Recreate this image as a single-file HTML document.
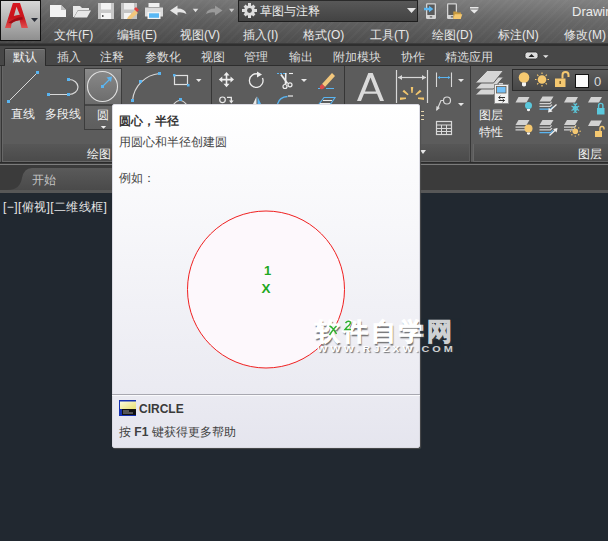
<!DOCTYPE html>
<html><head><meta charset="utf-8">
<style>
*{box-sizing:border-box}
html,body{margin:0;padding:0}
body{width:608px;height:541px;overflow:hidden;position:relative;background:#212830;font-family:"Liberation Sans",sans-serif;}
.a{position:absolute}
.t{position:absolute;white-space:nowrap;line-height:1}
#title{left:0;top:0;width:608px;height:43px;background:linear-gradient(#7a7a7a,#606060 50%,#4e4e4e);}
#titleh{left:0;top:0;width:608px;height:43px;background:linear-gradient(90deg,rgba(0,0,0,0.06),rgba(0,0,0,0) 60%,rgba(255,255,255,0.06));}
#stripes{left:0;top:0;width:608px;height:43px;background:repeating-linear-gradient(135deg,rgba(255,255,255,0) 0 4px,rgba(255,255,255,0.022) 4px 6px);}
.menu{color:#e8e8e8;font-size:12px;top:29px}
#band{left:0;top:43px;width:608px;height:3px;background:#2f2f2f;border-top:1px solid #3c3c3c}
#tabs{left:0;top:46px;width:608px;height:20px;background:#474747}
.tab{color:#dcdcdc;font-size:12px;top:51px}
#panel{left:0;top:65px;width:608px;height:98px;background:#5c5c5c;border-top:1px solid #2e2e2e}
.ptitle{top:144px;height:18px;background:linear-gradient(#575757,#4a4a4a);box-shadow:inset 1px -1px 0 #676767}
.sep{width:1px;background:#363636}
#ftabs{left:0;top:163px;width:608px;height:30px;background:#3b3b3b}
.lbl{color:#f4f4f4;font-size:12px}
#tip{left:112px;top:104px;width:308px;height:344px;border:1px solid #dcdce4;border-radius:2px;background:linear-gradient(#ffffff 0%,#f7f7fa 35%,#ebebf2 82%,#e5e5ee 100%);box-shadow:1px 1px 1px rgba(80,80,80,.9)}
</style></head><body>
<div id="title" class="a"></div>
<div id="titleh" class="a"></div>
<div id="stripes" class="a"></div>

<!-- app button -->
<div class="a" style="left:0;top:0;width:41px;height:41px;background:#111;"></div>
<div class="a" style="left:1px;top:1px;width:39px;height:39px;background:linear-gradient(#d6d6d6,#8f8f8f);"></div>
<svg class="a" style="left:0;top:0" width="41" height="41" viewBox="0 0 41 41">
  <defs><linearGradient id="lg" x1="0" y1="0" x2="0" y2="1"><stop offset="0" stop-color="#d81820"/><stop offset=".6" stop-color="#c8141c"/><stop offset="1" stop-color="#e05050"/></linearGradient></defs>
  <path d="M5 28 L12.9 3 H20 L28 28 H21.5 L19.6 20.3 Q15 21 11.6 23.2 L10.9 28 Z M13.8 16 L16.5 6.8 L19.8 14.8 Q16.5 15 13.8 16 Z" fill="url(#lg)" fill-rule="evenodd"/>
  <path d="M8.3 22.8 Q15 17.5 22.3 17 L22.8 19.6 Q16 20 11.3 23.5 Z" fill="#9c0e16"/>
  <path d="M31 18 L38 18 L34.5 22 Z" fill="#2a2e38"/>
</svg>

<!-- QAT icons -->
<svg class="a" style="left:45px;top:0" width="200" height="24" viewBox="45 0 200 24">
  <path d="M50 5 H61 L66 10 V17 H50 Z" fill="#f2f2f2"/>
  <path d="M61 5 V10 H66" fill="#bdbdbd"/>
  <path d="M73 6 H80 L82 8 H89 V10 H78 L74 17 H73 Z" fill="#e8e8e8"/>
  <path d="M78 10.5 H91 L87 17.5 H74 Z" fill="#e8e8e8"/>
  <path d="M98 3 H114 V19 H98 Z" fill="#c8c8c8"/>
  <path d="M101 3 H111 V9.5 H101 Z" fill="#f2f2f2"/>
  <path d="M101 13 H111 V19 H101 Z" fill="#f4f4f4"/>
  <rect x="102" y="15" width="1.5" height="2" fill="#555"/>
  <path d="M121 3 H137 V19 H121 Z" fill="#c4c4c4"/>
  <path d="M124 3 H134 V9.5 H124 Z" fill="#eeeeee"/>
  <path d="M124 13 H131 V19 H124 Z" fill="#f4f4f4"/>
  <path d="M128 17 L135 10 L138 13 L131 19 L127 19 Z" fill="#f3c77c"/>
  <path d="M134 9 L136 7 L139 10 L137 12 Z" fill="#e04040"/>
  <path d="M148.5 3 H159.5 V7 H148.5 Z" fill="#f0f0f0"/>
  <path d="M145 7.5 H163 V16.5 H145 Z" fill="#dcdcdc"/>
  <path d="M147.5 12 H160.5 V19 H147.5 Z" fill="#f4f4f4"/>
  <path d="M149 13.3 H159 V17.8 H149 Z" fill="#5ab8f4"/>
  <path d="M170 10.5 L177.5 5.5 V8.5 Q185 8.5 186.5 14 Q182.5 11.8 177.5 12.5 V15.5 Z" fill="#e6e6e6"/>
  <path d="M192.8 8.8 H198.3 L195.55 12.2 Z" fill="#e0e0e0"/>
  <path d="M222.5 10.5 L215 5.5 V8.5 Q207.5 8.5 206 14 Q210 11.8 215 12.5 V15.5 Z" fill="#9a9a9a"/>
  <path d="M229 8.8 H234.3 L231.65 12.2 Z" fill="#c8c8c8"/>
</svg>

<!-- workspace combobox -->
<div class="a" style="left:238px;top:0;width:180px;height:22px;background:linear-gradient(#585858,#434343);border:1px solid #1e1e1e;border-top:1px solid #2a2a2a"></div>
<svg class="a" style="left:242px;top:3px" width="15" height="15" viewBox="0 0 16 16">
  <g fill="#dedede"><circle cx="8" cy="8" r="5.6"/>
  <rect x="6.4" y="0" width="3.2" height="16"/><rect x="0" y="6.4" width="16" height="3.2"/>
  <rect x="6.4" y="0.6" width="3.2" height="14.8" transform="rotate(45 8 8)"/><rect x="6.4" y="0.6" width="3.2" height="14.8" transform="rotate(-45 8 8)"/></g>
  <circle cx="8" cy="8" r="2.6" fill="#505050"/>
</svg>
<div class="t" style="left:260px;top:5px;font-size:12px;color:#eaeaea">草图与注释</div>
<svg class="a" style="left:407px;top:8px" width="9" height="6"><path d="M0 0 H9 L4.5 5 Z" fill="#e6e6e6"/></svg>

<!-- phone icons -->
<svg class="a" style="left:420px;top:0" width="65" height="24" viewBox="420 0 65 24">
  <rect x="426" y="3.2" width="10" height="15.7" rx="1.2" fill="#d4d4d4"/>
  <rect x="427.3" y="4.5" width="7.4" height="10.5" fill="#5a5a5a"/>
  <rect x="429.8" y="16.4" width="2.4" height="1" fill="#444"/>
  <path d="M424 7.8 H429 V5.8 L433.3 9 L429 12.2 V10.2 H424 Z" fill="#5ab8f4"/>
  <rect x="447" y="3.2" width="10" height="15.7" rx="1.2" fill="#d4d4d4"/>
  <rect x="448.3" y="4.5" width="7.4" height="10.5" fill="#5a5a5a"/>
  <rect x="450.8" y="16.4" width="2.4" height="1" fill="#444"/>
  <path d="M453.3 11.6 H456.5 L457.5 12.6 H461 V18.9 H453.3 Z" fill="#c89a40"/>
  <path d="M454.8 14.3 H462.3 L460.7 18.9 H453.3 Z" fill="#f5c870"/>
  <rect x="470" y="7" width="8.5" height="1.5" fill="#e8e8e8"/>
  <path d="M470 9.5 H478.5 L474.25 13.5 Z" fill="#e8e8e8"/>
</svg>
<div class="t" style="left:572px;top:5px;font-size:13px;color:#ececec">Drawin</div>

<!-- menu -->
<div class="t menu" style="left:54px">文件(F)</div>
<div class="t menu" style="left:117px">编辑(E)</div>
<div class="t menu" style="left:180px">视图(V)</div>
<div class="t menu" style="left:243px">插入(I)</div>
<div class="t menu" style="left:303px">格式(O)</div>
<div class="t menu" style="left:370px">工具(T)</div>
<div class="t menu" style="left:432px">绘图(D)</div>
<div class="t menu" style="left:498px">标注(N)</div>
<div class="t menu" style="left:564px">修改(M)</div>

<div id="band" class="a"></div>
<div id="tabs" class="a"></div>
<div class="a" style="left:4px;top:48px;width:42px;height:18px;background:linear-gradient(#6a6a6a,#5c5c5c);border:1px solid #2a2a2a;border-bottom:none;border-radius:2px 2px 0 0;box-shadow:inset 0 1px 0 #7a7a7a"></div>
<div class="t tab" style="left:13px;color:#f4f4f4">默认</div>
<div class="t tab" style="left:57px">插入</div>
<div class="t tab" style="left:100px">注释</div>
<div class="t tab" style="left:145px">参数化</div>
<div class="t tab" style="left:201px">视图</div>
<div class="t tab" style="left:244px">管理</div>
<div class="t tab" style="left:289px">输出</div>
<div class="t tab" style="left:333px">附加模块</div>
<div class="t tab" style="left:401px">协作</div>
<div class="t tab" style="left:445px">精选应用</div>
<svg class="a" style="left:522px;top:50px" width="30" height="12"><rect x="3" y="2" width="13" height="7" rx="2.5" fill="#dedede" stroke="#2a2a2a" stroke-width=".8"/><path d="M6.5 7 L9.5 4 L12.5 7 Z" fill="#222"/><path d="M21 5.2 H26.5 L23.75 8 Z" fill="#e6e6e6"/></svg>

<!-- panel -->
<div id="panel" class="a"></div>
<div class="a" style="left:5px;top:65px;width:40px;height:1px;background:#5d5d5d"></div>
<div class="a ptitle" style="left:2px;width:209px"></div>
<div class="a" style="left:2px;top:66px;width:1px;height:96px;background:#676767"></div>
<div class="a ptitle" style="left:212px;width:132px"></div>
<div class="a ptitle" style="left:345px;width:124px"></div>
<div class="a ptitle" style="left:473px;width:135px"></div>
<div class="a sep" style="left:1px;top:66px;height:97px"></div>
<div class="a sep" style="left:211px;top:66px;height:97px"></div>
<div class="a sep" style="left:344px;top:66px;height:97px"></div>
<div class="a sep" style="left:470px;top:66px;height:97px"></div>
<div class="a" style="left:0;top:162px;width:608px;height:1px;background:#2a2a2a"></div>

<!-- draw panel icons -->
<svg class="a" style="left:0;top:66px" width="212" height="80" viewBox="0 66 212 80">
  <line x1="9" y1="101" x2="37.5" y2="72.5" stroke="#d8d8d8" stroke-width="1"/>
  <rect x="36" y="71" width="3" height="3" fill="#5ab4f0"/>
  <rect x="7" y="100" width="3" height="3" fill="#5ab4f0"/>
  <path d="M49 94.5 H68 M69 79.5 A9 7.5 0 0 1 69 94.5" stroke="#d8d8d8" stroke-width="1.2" fill="none"/>
  <rect x="47" y="93" width="3" height="3" fill="#5ab4f0"/>
  <rect x="67" y="93" width="3" height="3" fill="#5ab4f0"/>
  <rect x="67" y="78" width="3" height="3" fill="#5ab4f0"/>
  <rect x="84.5" y="68.5" width="37" height="61" fill="url(#gb)" stroke="#3c3c3c"/>
  <defs><linearGradient id="ga" x1="0" y1="0" x2="0" y2="1"><stop offset="0" stop-color="#8a8a8a"/><stop offset="1" stop-color="#6a6a6a"/></linearGradient>
  <linearGradient id="gb" x1="0" y1="0" x2="0" y2="1"><stop offset="0" stop-color="#727272"/><stop offset="1" stop-color="#5e5e5e"/></linearGradient></defs>
  <rect x="85" y="69" width="36" height="36" fill="url(#ga)"/>
  <line x1="84.5" y1="105" x2="121.5" y2="105" stroke="#3a3a3a" stroke-width="1.6"/>
  <circle cx="102.5" cy="86.5" r="15" stroke="#e0e0e0" stroke-width="1.1" fill="none"/>
  <line x1="102.5" y1="86.5" x2="110" y2="79" stroke="#5ab8f4" stroke-width="1.1"/>
  <path d="M106.5 77.5 L112 76.5 L111 82 Z" fill="#5ab4f0"/>
  <rect x="101" y="85" width="3" height="3" fill="#5ab4f0"/>
  <path d="M100.8 126 H106.2 L103.5 128.8 Z" fill="#eee"/>
  <path d="M132.5 100.5 A30 30 0 0 1 159.5 73.5" stroke="#d8d8d8" stroke-width="1.2" fill="none"/>
  <rect x="131" y="99" width="3" height="3" fill="#5ab4f0"/>
  <rect x="139" y="80" width="3" height="3" fill="#5ab4f0"/>
  <rect x="158" y="72" width="3" height="3" fill="#5ab4f0"/>
  <rect x="174.5" y="75.5" width="13" height="9" fill="none" stroke="#e0e0e0" stroke-width="1.2"/>
  <rect x="173" y="74" width="2.5" height="2.5" fill="#5ab4f0"/>
  <rect x="187" y="84" width="2.5" height="2.5" fill="#5ab4f0"/>
  <path d="M196 79 H201.5 L198.75 82 Z" fill="#e6e6e6"/>
  <path d="M173 105 Q180 96 187 105" stroke="#d8d8d8" stroke-width="1.2" fill="none"/>
  <rect x="179" y="98" width="3" height="3" fill="#5ab4f0"/>
</svg>
<div class="t lbl" style="left:11px;top:108px">直线</div>
<div class="t lbl" style="left:45px;top:108px">多段线</div>
<div class="t lbl" style="left:97px;top:109px">圆</div>
<div class="t lbl" style="left:87px;top:148px">绘图</div>

<!-- modify panel icons -->
<svg class="a" style="left:212px;top:66px" width="132" height="40" viewBox="212 66 132 40">
  <g fill="#eeeeee">
    <path d="M225.7 75 H227.3 V84.5 H225.7 Z M221.5 78.8 H231.5 V80.5 H221.5 Z"/>
    <path d="M226.5 72 L229.5 75.5 H223.5 Z M226.5 87.2 L229.5 83.8 H223.5 Z M218.8 79.6 L222.3 76.6 V82.6 Z M234 79.6 L230.5 76.6 V82.6 Z"/>
  </g>
  <path d="M258.5 74.2 A6.8 6.8 0 1 0 262.5 78" stroke="#eeeeee" stroke-width="1.3" fill="none"/>
  <path d="M257 71.5 L262 74.5 L257 77.5 Z" fill="#eeeeee"/>
  <path d="M277 73.5 H285" stroke="#5ab4f0" stroke-width="1.1" stroke-dasharray="2 1"/>
  <path d="M289 73.5 H293" stroke="#eeeeee" stroke-width="1.1"/>
  <path d="M281 74.5 L287.5 83.5" stroke="#eeeeee" stroke-width="1.8"/>
  <path d="M285.8 73 L285.5 84" stroke="#eeeeee" stroke-width="1.6"/>
  <circle cx="285" cy="86.5" r="2" stroke="#eeeeee" fill="none" stroke-width="1.2"/>
  <circle cx="290" cy="84.8" r="2" stroke="#eeeeee" fill="none" stroke-width="1.2"/>
  <path d="M301 79 H307 L304 82 Z" fill="#e6e6e6"/>
  <path d="M322 84 L332 73 L335 76 L325 87 Z" fill="#f3c77c"/>
  <path d="M320 86 L322 84 L325 87 L323 89 Q319 90 320 86Z" fill="#e04848"/>
  <path d="M318 88.5 H320 M326 88.5 H334" stroke="#5ab4f0"/>
  <circle cx="222.5" cy="99.8" r="2.8" stroke="#eaeaea" fill="none" stroke-width="1.2"/>
  <path d="M227 97.3 H231.3 V101" stroke="#eaeaea" stroke-width="1.3" fill="none"/>
  <path d="M229 100.5 H233.6 L231.3 103.5 Z" fill="#eaeaea"/>
  <path d="M253 104 L256.5 96.5 V104 Z" fill="#eaeaea"/><path d="M257.5 96.5 L261 104 H257.5 Z" fill="#5ab4f0"/>
  <path d="M277.5 104 Q279.5 97 287.5 96.5" stroke="#5ab4f0" stroke-width="1.3" fill="none"/>
  <path d="M288 96 H293" stroke="#eaeaea" stroke-width="1.2"/>
  <path d="M319.5 103.5 L324 97.5 H335 L331 103.5 Z" stroke="#5ab4f0" fill="none" stroke-width="1.1"/>
  <path d="M323 100.5 H332 M320 103.5 H330" stroke="#eaeaea" stroke-width="1"/>
</svg>
<!-- annotation panel -->
<svg class="a" style="left:345px;top:66px" width="125" height="98" viewBox="345 66 125 98">
  <path d="M357 101 L368.3 73 H372.7 L384 101 H380 L377 93.8 H364 L361 101 Z M365 91.6 H376 L370.5 77.5 Z" fill="#dadada" fill-rule="evenodd"/>
  <path d="M396.5 70 V103 M427.5 70 V103" stroke="#d8d8d8" stroke-width="1.2"/>
  <path d="M398 77.5 H426" stroke="#d8d8d8" stroke-width="1.2"/>
  <path d="M398 77.5 L402 75 V80 Z M426 77.5 L422 75 V80 Z" fill="#d8d8d8"/>
  <g fill="#f2c66e"><path d="M410.8 87 H413.2 L412.6 93 H411.4 Z"/><path d="M402.5 91.5 L404 89.8 L408.6 94.2 L407.6 95.2 Z"/><path d="M421.5 91.5 L420 89.8 L415.4 94.2 L416.4 95.2 Z"/><path d="M400 97.5 L406 97.6 L406 99 L400 100 Z"/><path d="M424 97.5 L418 97.6 L418 99 L424 100 Z"/></g>
  <path d="M436.5 72.5 V87 M451.5 72.5 V87" stroke="#d8d8d8" stroke-width="1.1"/>
  <path d="M438 77.5 H450" stroke="#5ab4f0" stroke-width="1"/><path d="M437.5 77.5 L440 76 V79 Z M450.5 77.5 L448 76 V79 Z" fill="#5ab4f0"/>
  <path d="M458 79 H464 L461 82 Z M458 103 H464 L461 106 Z" fill="#e6e6e6"/>
  <circle cx="447" cy="100.5" r="3.5" stroke="#d8d8d8" fill="none" stroke-width="1.2"/>
  <path d="M443.5 100.5 H441 L437 110" stroke="#d8d8d8" stroke-width="1.2" fill="none"/>
  <path d="M436 111 L436.5 106 L440 108 Z" fill="#d8d8d8"/>
  <rect x="436.5" y="121.5" width="15" height="13" fill="none" stroke="#d8d8d8" stroke-width="1.2"/>
  <path d="M436.5 125 H451.5 M436.5 128.5 H451.5 M436.5 131.5 H451.5 M441.5 125 V134.5 M446.5 125 V134.5" stroke="#d8d8d8" stroke-width="1"/>
  <path d="M421 111.5 H424 M421 115.5 H424 M421 119.5 H424" stroke="#e8d8b0" stroke-width="1"/>
  <path d="M420 150 H426 L423 154 Z" fill="#e6e6e6"/>
</svg>

<!-- layers panel -->
<svg class="a" style="left:474px;top:66px" width="134" height="80" viewBox="474 66 134 80">
  <defs>
    <linearGradient id="lc" x1="0" y1="0" x2="0" y2="1"><stop offset="0" stop-color="#5c5c5c"/><stop offset="1" stop-color="#474747"/></linearGradient>
    <path id="pg" d="M3 0 H14 L11 5.5 H0 Z"/>
    <g id="stk"><path d="M3 0 H14 L11 5 H0 Z" fill="#d2d2d2"/><path d="M0 6.5 H10.5 L11.5 5 L12.5 5.6 L11 7.8 H0 Z" fill="#d2d2d2"/><path d="M0 9.3 H9.5 L10.5 8 L11.5 8.5 L10 10.6 H0 Z" fill="#d2d2d2"/></g>
    <g id="stkb"><path d="M3 0 H14 L11 5 H0 Z" fill="#d2d2d2"/><path d="M0 6.5 H10.5 L11.5 5 L12.5 5.6 L11 7.8 H0 Z" fill="#d2d2d2"/><path d="M0 9.3 H10.5 L12 7.8 L13 8.4 L11 10.6 H0 Z" fill="#d2d2d2"/><path d="M0 12 H11 L13 10 L14 10.6 L11.5 13.3 H0 Z" fill="#5ab4f0"/></g>
  </defs>
  <g fill="#d6d6d6" stroke="#5c5c5c" stroke-width="1">
    <path d="M487.2 83 H503.5 L493.5 95 H475.2 Z"/>
    <path d="M487.2 77 H503.5 L493.5 89 H475.2 Z"/>
    <path d="M487.2 70.5 H503.5 L493.5 83 H475.2 Z"/>
  </g>
  <rect x="494.5" y="84.5" width="14" height="19" fill="#f2f2f2" stroke="#8a8a8a"/>
  <rect x="499" y="83" width="4" height="1.5" fill="#d0d0d0"/>
  <rect x="496.5" y="86.5" width="9.5" height="6.5" fill="#72c0f8" stroke="#6a5a4a" stroke-width=".8"/>
  <path d="M499 97.5 H505 M498.5 100.5 H504.5" stroke="#333" stroke-width="1"/>
  <path d="M500.5 95.8 L498.5 97.5 L500.5 99.2 M502.5 98.8 L504.5 100.5 L502.5 102.2" stroke="#333" stroke-width=".9" fill="none"/>
  <rect x="512.5" y="69.5" width="96" height="21" fill="url(#lc)" stroke="#2c2c2c"/>
  <circle cx="524" cy="77.6" r="5.3" fill="#f5c870"/><path d="M522 82.5 H526 V85.5 Q524 87.5 522 85.5 Z" fill="#f4f4f4"/>
  <circle cx="542" cy="79.5" r="4.3" fill="#f5c870"/>
  <g stroke="#f5c870" stroke-width="1.2"><path d="M542 72.5 V74 M542 85 V86.5 M535 79.5 H536.5 M547.5 79.5 H549 M537.2 74.7 L538.3 75.8 M545.7 83.2 L546.8 84.3 M546.8 74.7 L545.7 75.8 M537.2 84.3 L538.3 83.2"/></g>
  <rect x="555" y="78.5" width="10.5" height="8.5" fill="#f5c870"/>
  <rect x="559.5" y="81" width="1.3" height="3" fill="#6a5020"/>
  <path d="M562.5 78.5 V75 A3 3 0 0 1 568.5 75 V77" stroke="#f5c870" stroke-width="2" fill="none"/>
  <rect x="575.5" y="74.5" width="13" height="13" fill="#fafafa" stroke="#111"/>
  <!-- row 1 -->
  <use href="#pg" x="515.5" y="97" fill="#d2d2d2"/>
  <circle cx="528.5" cy="105.5" r="3.5" fill="#5bc8dc"/><path d="M527 109 H530 V110.5 Q528.5 112 527 110.5 Z" fill="#f4f4f4"/>
  <use href="#stkb" x="539.5" y="96.5"/>
  <path d="M556.5 104.5 L549.5 111" stroke="#f0f0f0" stroke-width="1.3"/><path d="M548 112.5 L548.8 107.8 L552.6 111.6 Z" fill="#f0f0f0"/>
  <use href="#pg" x="564" y="97" fill="#d2d2d2"/>
  <g stroke="#5bc8dc" stroke-width="1.1" fill="none"><path d="M575.3 103.8 V112.6 M571.5 106 L579.1 110.4 M579.1 106 L571.5 110.4"/><path d="M573.5 103.5 L575.3 105 L577.1 103.5 M573.5 112.9 L575.3 111.4 L577.1 112.9"/><circle cx="575.3" cy="108.2" r="2"/></g>
  <use href="#pg" x="588" y="97" fill="#d2d2d2"/>
  <rect x="597" y="108" width="7.5" height="6.5" fill="#5bc8dc"/><path d="M598.6 108 V105.5 A2.15 2.15 0 0 1 602.9 105.5 V108" stroke="#5bc8dc" fill="none" stroke-width="1.4"/>
  <!-- row 2 -->
  <use href="#stk" x="515.5" y="120"/>
  <circle cx="528.5" cy="128.5" r="4" fill="#f5c870"/><path d="M527 132.5 H530 V134 Q528.5 135.5 527 134 Z" fill="#f4f4f4"/>
  <use href="#stkb" x="539.5" y="120"/>
  <path d="M549.5 135.5 L556 129.5" stroke="#f0f0f0" stroke-width="1.3"/><path d="M557.5 128 L556.6 132.6 L553 129 Z" fill="#f0f0f0"/>
  <use href="#stk" x="564" y="120"/>
  <circle cx="575.3" cy="131.3" r="2.8" fill="#f5c870"/>
  <g fill="#f5c870"><circle cx="575.3" cy="126.5" r=".7"/><circle cx="575.3" cy="136.1" r=".7"/><circle cx="570.5" cy="131.3" r=".7"/><circle cx="580.1" cy="131.3" r=".7"/><circle cx="571.9" cy="127.9" r=".7"/><circle cx="578.7" cy="134.7" r=".7"/><circle cx="578.7" cy="127.9" r=".7"/><circle cx="571.9" cy="134.7" r=".7"/></g>
  <use href="#pg" x="588" y="120.5" fill="#d2d2d2"/>
  <rect x="595" y="131" width="7" height="6" fill="#f5c870"/><path d="M600 131 V128.5 A2 2 0 0 1 604 128.5 V129.5" stroke="#f5c870" fill="none" stroke-width="1.4"/>
</svg>
<div class="t" style="left:594px;top:75px;font-size:13px;color:#dcdcdc">0</div>
<div class="t lbl" style="left:479px;top:109px">图层</div>
<div class="t lbl" style="left:479px;top:126px">特性</div>
<div class="t lbl" style="left:578px;top:148px">图层</div>

<!-- file tabs -->
<div id="ftabs" class="a"></div>
<div class="a" style="left:0;top:164px;width:608px;height:1px;background:#7c7c7c"></div><div class="a" style="left:0;top:163px;width:608px;height:1px;background:#3a3a3a"></div>
<svg class="a" style="left:0;top:164px" width="608" height="29" viewBox="0 164 608 29">
  <defs><linearGradient id="tg" x1="0" y1="0" x2="0" y2="1"><stop offset="0" stop-color="#5a5a5a"/><stop offset="1" stop-color="#4a4a4a"/></linearGradient></defs><path d="M8 190 Q20 190 22 178 Q24 168 32 168 H290 Q298 168 300 178 Q302 190 314 190 Z" fill="url(#tg)"/>
  <rect x="0" y="190" width="608" height="3" fill="#575757"/>
</svg>
<div class="t" style="left:32px;top:174px;font-size:12px;color:#c4c4c4">开始</div>

<!-- drawing label -->
<div class="t" style="left:3px;top:201px;font-size:12px;color:#e6e6e6;letter-spacing:0.4px">[−][俯视][二维线框]</div>

<!-- tooltip -->
<div id="tip" class="a"></div>
<div class="t" style="left:119px;top:115px;font-size:12px;font-weight:bold;color:#383838">圆心，半径</div>
<div class="t" style="left:119px;top:136px;font-size:12px;color:#464646">用圆心和半径创建圆</div>
<div class="t" style="left:119px;top:172px;font-size:12px;color:#464646">例如：</div>
<svg class="a" style="left:112px;top:104px" width="308" height="290" viewBox="112 104 308 290">
  <circle cx="266" cy="289.5" r="78.5" fill="#fdf8fc" stroke="#f02020" stroke-width="1"/>
  <text x="264" y="275" font-family="Liberation Sans" font-weight="bold" font-size="13" fill="#22a822">1</text>
  <text x="261.5" y="293" font-family="Liberation Sans" font-weight="bold" font-size="13.5" fill="#22a822">X</text>
</svg>
<div class="a" style="left:112px;top:394px;width:308px;height:1px;background:#a8a8b0"></div>
<div class="a" style="left:112px;top:395px;width:308px;height:1px;background:#fafafc"></div>
<svg class="a" style="left:119px;top:400px" width="17" height="16" viewBox="0 0 17 16">
  <defs><linearGradient id="cy" x1="0" y1="0" x2="1" y2="1"><stop offset="0" stop-color="#fdfde0"/><stop offset="1" stop-color="#e8e070"/></linearGradient></defs>
  <rect x="0" y="0" width="17" height="16" fill="#1530b0"/>
  <rect x="1" y="1.5" width="16" height="7.5" fill="url(#cy)"/>
  <rect x="3" y="9" width="14" height="6" fill="#111"/>
  <path d="M4 11 H10 M4 13 H14" stroke="#bbb" stroke-width=".8"/>
</svg>
<div class="t" style="left:139px;top:403px;font-size:12px;font-weight:bold;color:#3a3a3a">CIRCLE</div>
<div class="t" style="left:119px;top:426px;font-size:12px;color:#404040">按 <b>F1</b> 键获得更多帮助</div>

<!-- watermark -->
<div class="t" style="left:315px;top:319px;font-size:25px;font-weight:bold;color:#ffffff;-webkit-text-stroke:0.8px #ffffff;text-shadow:1px 2px 1px rgba(70,70,70,.75);letter-spacing:3px">软件自学网</div>
<div class="t" style="left:317px;top:345px;font-size:9px;font-weight:bold;color:#ffffff;text-shadow:1px 1px 1px rgba(60,60,60,.7);letter-spacing:2.6px;transform:scaleX(1.2);transform-origin:0 0">WWW.RJZXW.COM</div>
<div class="a" style="left:421px;top:318px;width:40px;height:38px;background:rgba(33,40,48,0.22)"></div>

<svg class="a" style="left:325px;top:318px" width="32" height="20" viewBox="325 318 32 20">
  <path d="M329.5 326 Q333 327.5 336.5 334 M336.5 326 Q333 329 329.5 335" stroke="#30b030" stroke-width="1.5" fill="none"/>
  <path d="M345.5 323 Q348 320 350.5 322 Q351 324 347 327 L345 329.5 H351" stroke="#30b030" stroke-width="1.5" fill="none"/>
</svg>
</body></html>
